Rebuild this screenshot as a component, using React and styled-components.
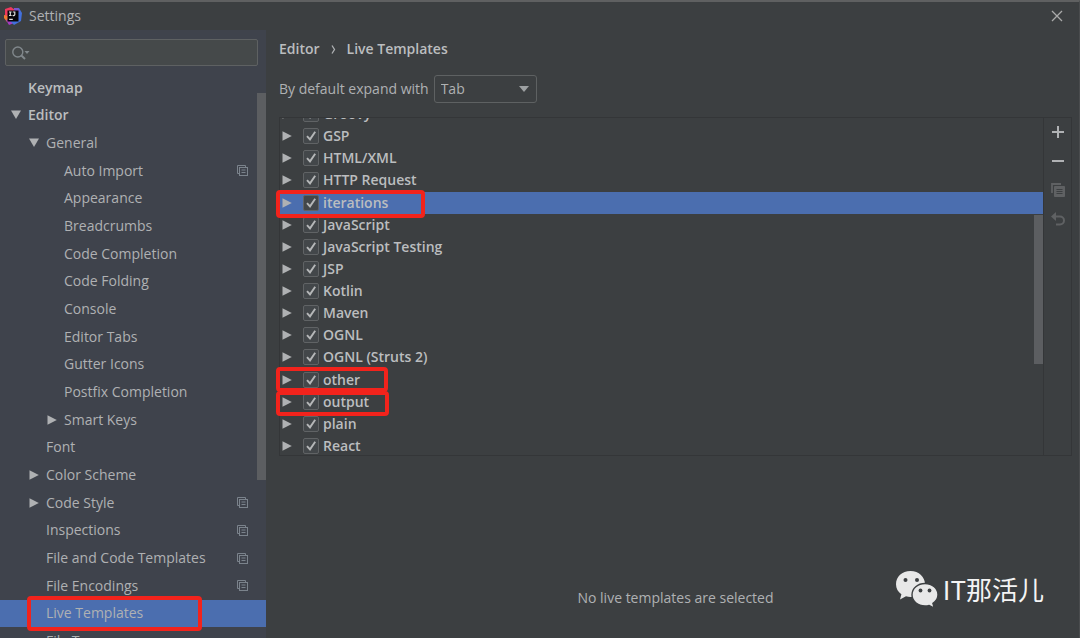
import React, { useState } from 'react';
import { styled, createGlobalStyle } from 'styled-components';

const Colors = {
  bg: '#3c3f41',
  sidebar: '#3f434c',
  field: '#45494a',
  border: '#5e6162',
  line: '#343638',
  text: '#afb1b3',
  bright: '#bbbdbf',
  selected: '#4b6eaf',
  thumb: '#5c5e61',
  mark: '#f2231c',
};

const TREE = [
  { label: 'Keymap', level: 0, bold: true },
  { label: 'Editor', level: 0, bold: true, arrow: 'down' },
  { label: 'General', level: 1, arrow: 'down' },
  { label: 'Auto Import', level: 2, project: true },
  { label: 'Appearance', level: 2 },
  { label: 'Breadcrumbs', level: 2 },
  { label: 'Code Completion', level: 2 },
  { label: 'Code Folding', level: 2 },
  { label: 'Console', level: 2 },
  { label: 'Editor Tabs', level: 2 },
  { label: 'Gutter Icons', level: 2 },
  { label: 'Postfix Completion', level: 2 },
  { label: 'Smart Keys', level: 2, arrow: 'right' },
  { label: 'Font', level: 1 },
  { label: 'Color Scheme', level: 1, arrow: 'right' },
  { label: 'Code Style', level: 1, arrow: 'right', project: true },
  { label: 'Inspections', level: 1, project: true },
  { label: 'File and Code Templates', level: 1, project: true },
  { label: 'File Encodings', level: 1, project: true },
  { label: 'Live Templates', level: 1, marked: true },
  { label: 'File Types', level: 1 },
];

const GROUPS = [
  'Groovy', 'GSP', 'HTML/XML', 'HTTP Request', 'iterations', 'JavaScript',
  'JavaScript Testing', 'JSP', 'Kotlin', 'Maven', 'OGNL', 'OGNL (Struts 2)',
  'other', 'output', 'plain', 'React',
];

const Arrow = ({ dir }) => (
  <svg width="10" height="10" viewBox="0 0 10 10" fill={Colors.text}>
    {dir === 'down' && <path d="M0 0.500h10L5 9z" />}
    {dir === 'right' && <path d="M0.500 0.200v9.600L9.800 5z" />}
  </svg>
);

const LogoIcon = () => (
  <svg width="18" height="18" viewBox="0 0 18 18">
    <path d="M1 2l6-2 4 3-2 8-8-1z" fill="#f0385e" />
    <path d="M0 8l4 1 4 6-5 0-3-4z" fill="#ef7b32" />
    <path d="M2 13l6-2 2 5-5 2z" fill="#a63cc0" />
    <path d="M10 1l5 0 3 5-1 8-7 4-4-4 4-6z" fill="#4270dc" />
    <path d="M10 1l4 0 2 4-6 0z" fill="#7d54cb" />
    <rect x="3.500" y="3.500" width="11" height="11" fill="#07060a" />
    <path d="M5 5h2.600M6.300 5v3.500M5 8.500h2.600M8.800 5h2.600M10.800 5v2.500q0 1.200-2.200 1M5.200 12.300h3.600" fill="none" stroke="#ddd" strokeWidth="1.200" />
  </svg>
);

const SearchIcon = () => (
  <svg width="20" height="16" viewBox="0 0 20 16" fill="none" stroke="#81888c" strokeWidth="1.4">
    <circle cx="6.8" cy="7" r="5" />
    <path d="M10.4 10.6l3.6 3.4" strokeWidth="2" />
    <path d="M13.5 6h5L16 9z" fill="#81888c" stroke="none" />
  </svg>
);

const ProjectIcon = () => (
  <svg width="11" height="11" viewBox="0 0 11 11" fill="none" stroke="#7b838c">
    <path d="M2.500 8.500h-2v-8h8v2" />
    <rect x="2.500" y="2.500" width="8" height="8" />
    <path d="M4.500 5h4M4.500 7.500h4" />
  </svg>
);

const CheckIcon = () => (
  <svg width="16" height="16" viewBox="0 0 16 16" fill="none" stroke="#b5b7b8" strokeWidth="1.9">
    <path d="M4 8.2l3 3.2 5.2-7.6" />
  </svg>
);

const WechatIcon = () => (
  <svg width="44" height="38" viewBox="0 0 44 38">
    <path d="M15.500 1C7 1 1 6.800 1 14.200c0 4.200 2 7.600 5.400 10L5 29.500l6-3.200c1.500.4 3 .6 4.500.6C24 26.900 30 21.300 30 14.200S24 1 15.500 1z" fill="#e8e8e8" />
    <path d="M30 13.500c-7.300 0-13 5-13 11.300S22.700 36 30 36c1.500 0 2.900-.2 4.200-.6l5 2.600-1.300-4.600c3.100-2 5.100-5 5.100-8.600 0-6.300-5.700-11.300-13-11.300z" fill="#e8e8e8" stroke="#3c3f41" strokeWidth="1.400" />
    <g fill="#3c3f41">
      <circle cx="10.500" cy="10" r="2" />
      <circle cx="22" cy="10" r="2" />
      <circle cx="25.500" cy="20.500" r="1.900" />
      <circle cx="34.500" cy="20.500" r="1.900" />
    </g>
  </svg>
);

export default function App() {
  const [page, setPage] = useState('Live Templates');
  const [group, setGroup] = useState('iterations');
  const [query, setQuery] = useState('');
  const [unchecked, setUnchecked] = useState([]);

  const handleToggle = (name) => {
    setUnchecked(unchecked.includes(name)
      ? unchecked.filter(item => item !== name)
      : [...unchecked, name]);
  };

  return (
    <Window>
      <GlobalStyle />
      <TitleBar>
        <LogoIcon />
        <Title>Settings</Title>
        <CloseButton aria-label="Close">
          <svg width="12" height="12" viewBox="0 0 12 12" stroke="#aaa" strokeWidth="1.300">
            <path d="M1 1l10 10M11 1L1 11" />
          </svg>
        </CloseButton>
      </TitleBar>
      <Body>
        <Sidebar>
          <SearchBox>
            <SearchIcon />
            <SearchInput aria-label="Search settings" value={query} onChange={e => setQuery(e.target.value)} />
          </SearchBox>
          <TreeArea>
            <Tree>
              {TREE.map(item => (
                <TreeItem key={item.label}>
                  <TreeButton
                    $level={item.level}
                    $bold={item.bold}
                    $selected={item.label === page}
                    onClick={() => setPage(item.label)}
                  >
                    <Arrow dir={item.arrow} />
                    <TreeLabel>{item.label}</TreeLabel>
                    {item.project && <ProjectIcon />}
                  </TreeButton>
                  {item.marked && <Mark $top={-4} $left={27} $width={175} $height={35} />}
                </TreeItem>
              ))}
            </Tree>
            <Thumb $top={19} $right={0} $height={387} />
          </TreeArea>
        </Sidebar>
        <Main>
          <Breadcrumb>
            <span>Editor</span>
            <svg width="5" height="9" viewBox="0 0 5 9" fill="none" stroke={Colors.text} strokeWidth="1.300">
              <path d="M1 0.500l2.500 4L1 8.500" />
            </svg>
            <span>Live Templates</span>
          </Breadcrumb>
          <ExpandRow>
            <label htmlFor="expand">By default expand with</label>
            <SelectBox>
              <Select id="expand" defaultValue="Tab">
                <option>Tab</option>
                <option>Enter</option>
                <option>Space</option>
              </Select>
              <svg width="10" height="6" viewBox="0 0 10 6" fill="#9da0a2"><path d="M0 0h10L5 6z" /></svg>
            </SelectBox>
          </ExpandRow>
          <Panel>
            <ListArea>
              <GroupList>
                {GROUPS.map(name => (
                  <GroupRow key={name} $selected={name === group} onClick={() => setGroup(name)}>
                    <Arrow dir="right" />
                    <CheckLabel>
                      <CheckBox>
                        <CheckInput
                          type="checkbox"
                          checked={!unchecked.includes(name)}
                          onChange={() => handleToggle(name)}
                        />
                        {!unchecked.includes(name) && <CheckIcon />}
                      </CheckBox>
                      {name}
                    </CheckLabel>
                  </GroupRow>
                ))}
              </GroupList>
              <Thumb $top={97} $right={0} $height={149} />
            </ListArea>
            <Tools>
              <ToolButton aria-label="Add">
                <svg width="14" height="14" viewBox="0 0 14 14" stroke="#b0b2b4" strokeWidth="2"><path d="M7 1v12M1 7h12" /></svg>
              </ToolButton>
              <ToolButton aria-label="Remove">
                <svg width="14" height="14" viewBox="0 0 14 14" stroke="#b0b2b4" strokeWidth="2"><path d="M1 7h12" /></svg>
              </ToolButton>
              <ToolButton aria-label="Duplicate" disabled>
                <svg width="14" height="14" viewBox="0 0 14 14" fill="none" stroke="#5f6163">
                  <path d="M1 10V1h9" strokeWidth="1.800" />
                  <path d="M3.500 3.500h10v10h-10z" fill="#5f6163" />
                  <path d="M5.500 6.500h6M5.500 8.500h6M5.500 10.500h6" stroke="#3c3f41" />
                </svg>
              </ToolButton>
              <ToolButton aria-label="Revert" disabled>
                <svg width="14" height="14" viewBox="0 0 14 14" fill="none" stroke="#5f6163" strokeWidth="2">
                  <path d="M3 4.500h6a4 4 0 0 1 0 8H5" />
                  <path d="M0 4.500L5 0v9z" fill="#5f6163" stroke="none" />
                </svg>
              </ToolButton>
            </Tools>
            <Mark $top={72} $left={-4} $width={149} $height={28} />
            <Mark $top={249} $left={-4} $width={112} $height={25} />
            <Mark $top={273} $left={-4} $width={113} $height={25} />
          </Panel>
          <Empty>No live templates are selected</Empty>
          <Watermark>
            <WechatIcon />
            <span>IT那活儿</span>
          </Watermark>
        </Main>
      </Body>
    </Window>
  );
}

const GlobalStyle = createGlobalStyle`
  * {
    box-sizing: border-box;
  }
  body {
    margin: 0;
    background: ${Colors.bg};
    color: ${Colors.text};
    font-family: "Open Sans", "Noto Sans CJK SC", sans-serif;
    font-size: 14px;
    line-height: 20px;
  }
  button, input, select {
    font: inherit;
    color: inherit;
  }
  svg {
    flex: none;
    display: block;
  }
`;

const Window = styled.div`
  height: 100vh;
  display: flex;
  flex-direction: column;
  overflow: hidden;
  border-top: 2px solid #5f6061;
  border-right: 1px solid #4a4c4e;
`;

const TitleBar = styled.header`
  height: 28px;
  flex: none;
  display: flex;
  align-items: center;
  gap: 7px;
  padding: 0 16px 1px 4px;
`;

const Title = styled.span`
  flex: 1;
`;

const CloseButton = styled.button`
  padding: 0;
  border: 0;
  background: none;
`;

const Body = styled.div`
  flex: 1;
  min-height: 0;
  display: flex;
`;

const Sidebar = styled.aside`
  width: 266px;
  flex: none;
  display: flex;
  flex-direction: column;
  background: ${Colors.sidebar};
`;

const SearchBox = styled.div`
  flex: none;
  height: 27px;
  margin: 9px 8px 8px 5px;
  padding-left: 5px;
  display: flex;
  align-items: center;
  border: 1px solid ${Colors.border};
  border-radius: 2px;
  background: ${Colors.field};
`;

const SearchInput = styled.input`
  flex: 1;
  min-width: 0;
  border: 0;
  outline: none;
  background: none;
`;

const TreeArea = styled.div`
  position: relative;
  flex: 1;
  min-height: 0;
  overflow: hidden;
`;

const Tree = styled.ul`
  height: 581px;
  margin: 0;
  padding: 0;
  list-style: none;
  display: grid;
  grid-auto-rows: 1fr;
`;

const TreeItem = styled.li`
  position: relative;
  display: grid;
`;

const TreeButton = styled.button`
  display: flex;
  align-items: center;
  gap: 7px;
  padding: 0 18px 0 ${props => 11 + props.$level * 18}px;
  border: 0;
  text-align: left;
  font-weight: ${props => (props.$bold ? 600 : 400)};
  color: ${props => (props.$bold ? Colors.bright : Colors.text)};
  background: ${props => (props.$selected ? Colors.selected : 'none')};
`;

const TreeLabel = styled.span`
  flex: 1;
`;

const Thumb = styled.div`
  position: absolute;
  top: ${props => props.$top}px;
  right: ${props => props.$right}px;
  width: 9px;
  height: ${props => props.$height}px;
  background: ${Colors.thumb};
`;

const Mark = styled.div`
  position: absolute;
  z-index: 1;
  top: ${props => props.$top}px;
  left: ${props => props.$left}px;
  width: ${props => props.$width}px;
  height: ${props => props.$height}px;
  border: 4px solid ${Colors.mark};
  border-radius: 4px;
  pointer-events: none;
`;

const Main = styled.main`
  position: relative;
  flex: 1;
  min-width: 0;
  display: flex;
  flex-direction: column;
  padding: 9px 7px 0 13px;
`;

const Breadcrumb = styled.nav`
  display: flex;
  align-items: center;
  gap: 11px;
  font-weight: 600;
  color: ${Colors.bright};
`;

const ExpandRow = styled.div`
  display: flex;
  align-items: center;
  gap: 5px;
  margin: 16px 0 14px;
`;

const SelectBox = styled.div`
  position: relative;
  width: 103px;

  svg {
    position: absolute;
    top: 11px;
    right: 8px;
    pointer-events: none;
  }
`;

const Select = styled.select`
  display: block;
  appearance: none;
  width: 100%;
  height: 28px;
  padding: 0 6px;
  border: 1px solid ${Colors.border};
  border-radius: 3px;
  background: ${Colors.bg};
`;

const Panel = styled.section`
  position: relative;
  flex: none;
  height: 339px;
  display: flex;
  border: 1px solid ${Colors.line};
`;

const ListArea = styled.div`
  position: relative;
  flex: 1;
  overflow: hidden;
`;

/* list is scrolled a little, the first row is cut by the panel edge */
const GroupList = styled.ul`
  height: 354px;
  margin: -15px 0 0;
  padding: 0;
  list-style: none;
  display: grid;
  grid-auto-rows: 1fr;
`;

const GroupRow = styled.li`
  display: flex;
  align-items: center;
  gap: 11px;
  padding-left: 2px;
  font-weight: 600;
  color: ${Colors.bright};
  background: ${props => (props.$selected ? Colors.selected : 'none')};
`;

const CheckLabel = styled.label`
  display: flex;
  align-items: center;
  gap: 4px;
`;

const CheckBox = styled.span`
  position: relative;

  svg {
    position: absolute;
    inset: 0;
    pointer-events: none;
  }
`;

const CheckInput = styled.input`
  display: block;
  appearance: none;
  width: 16px;
  height: 16px;
  margin: 0;
  border: 1px solid #606365;
  border-radius: 2px;
  background: #43474a;
`;

const Tools = styled.div`
  width: 28px;
  flex: none;
  display: flex;
  flex-direction: column;
  align-items: center;
  gap: 1px;
  border-left: 1px solid ${Colors.line};
`;

const ToolButton = styled.button`
  width: 28px;
  height: 28px;
  padding: 0;
  border: 0;
  background: none;
  display: grid;
  place-items: center;
`;

const Empty = styled.p`
  flex: 1;
  margin: 0;
  display: grid;
  place-items: center;
  padding-top: 102px;
`;

const Watermark = styled.div`
  position: absolute;
  right: 35px;
  bottom: 29px;
  display: flex;
  align-items: center;
  gap: 4px;
  font-family: "Noto Sans CJK SC", sans-serif;
  font-size: 26px;
  line-height: 40px;
  font-weight: 400;
  color: #f4f4f4;
`;
